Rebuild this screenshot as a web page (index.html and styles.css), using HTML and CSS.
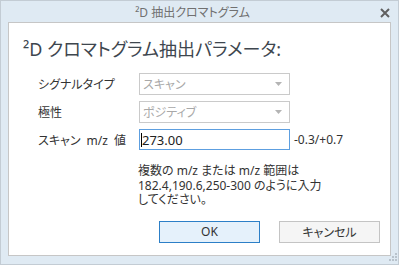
FILE: index.html
```html
<!DOCTYPE html>
<html lang="ja">
<head>
  <meta charset="UTF-8">
  <title>2D 抽出クロマトグラム</title>
  <link rel="stylesheet" href="styles.css">
</head>
<body>
  <div class="dialog">
    <div class="title-bar">
      <span class="title">²D 抽出クロマトグラム</span>
      <svg class="close" width="10" height="10" viewBox="0 0 10 10">
        <path d="M1 1 L9 9 M9 1 L1 9" stroke="#5f5f5f" stroke-width="2" fill="none"/>
      </svg>
    </div>

    <div class="client">
      <h1>²D クロマトグラム抽出パラメータ:</h1>

      <div class="form-grid">
        <label>シグナルタイプ</label>
        <div class="select disabled">
          <span>スキャン</span>
          <svg width="7" height="4" viewBox="0 0 7 4"><path d="M0 0 H7 L3.5 4 Z" fill="#b4b4b4"/></svg>
        </div>
        <span></span>

        <label>極性</label>
        <div class="select disabled">
          <span>ポジティブ</span>
          <svg width="7" height="4" viewBox="0 0 7 4"><path d="M0 0 H7 L3.5 4 Z" fill="#b4b4b4"/></svg>
        </div>
        <span></span>

        <label class="spaced">スキャン m/z 値</label>
        <div class="text-input"><span class="caret"></span>273.00</div>
        <span class="range">-0.3/+0.7</span>
      </div>

      <div class="hint">
        <div>複数の m/z または m/z 範囲は</div>
        <div>182.4,190.6,250-300 のように入力</div>
        <div>してください。</div>
      </div>

      <div class="buttons">
        <button class="btn primary">OK</button>
        <button class="btn">キャンセル</button>
      </div>
    </div>

    <svg class="grip" width="12" height="12" viewBox="0 0 12 12">
      <g fill="#b9c3cc">
        <rect x="10" y="2" width="2" height="2"/>
        <rect x="7" y="5" width="2" height="2"/>
        <rect x="10" y="5" width="2" height="2"/>
        <rect x="4" y="8" width="2" height="2"/>
        <rect x="7" y="8" width="2" height="2"/>
        <rect x="10" y="8" width="2" height="2"/>
      </g>
    </svg>
  </div>
</body>
</html>
```

FILE: styles.css
```css
body {
  margin: 0;
  padding: 0;
  font-family: "Noto Sans", "Noto Sans CJK JP", sans-serif;
  font-feature-settings: "palt";
  font-size: 12px;
  color: #333333;
}

.dialog {
  position: relative;
  width: 399px;
  height: 265px;
  box-sizing: border-box;
  background-color: #dfeaf3;
  border: 1px solid #c3ccd4;
}

.title-bar {
  height: 21px;
  display: flex;
  align-items: center;
  padding-right: 24px;
}

.title {
  flex: 1;
  text-align: center;
  color: #707070;
  font-size: 12px;
  padding-left: 4px;
}

.close {
  margin-top: 2px;
  margin-right: -16px;
}

.client {
  margin-left: 7px;
  width: 383px;
  height: 234px;
  box-sizing: border-box;
  background-color: #ffffff;
  border: 1px solid #c6c6c6;
}

h1 {
  margin: 0;
  padding: 14px 0 0 14px;
  font-size: 18px;
  line-height: 24px;
  font-weight: normal;
  color: #3e464e;
}

.form-grid {
  display: grid;
  grid-template-columns: 101px 151px auto;
  row-gap: 6px;
  align-items: center;
  margin-top: 12px;
  padding-left: 29px;
}

label {
  color: #333333;
}

.spaced {
  word-spacing: 3px;
}

.select {
  height: 22px;
  box-sizing: border-box;
  border: 1px solid #cacaca;
  display: flex;
  align-items: center;
  justify-content: space-between;
  padding: 0 7px 0 3px;
}

.select.disabled {
  color: #a8a8a8;
}

.text-input {
  height: 21px;
  box-sizing: border-box;
  border: 1px solid #5d9fe0;
  display: flex;
  align-items: center;
  padding-left: 1px;
  color: #222222;
  font-size: 13px;
}

.caret {
  width: 1px;
  height: 14px;
  background-color: #000000;
}

.range {
  padding-left: 4px;
  color: #333333;
}

.hint {
  margin: 14px 0 0 129px;
  line-height: 14.5px;
  color: #333333;
}

.buttons {
  display: flex;
  justify-content: flex-end;
  gap: 19px;
  margin-top: 13px;
  padding-right: 10px;
}

.btn {
  width: 101px;
  height: 22px;
  box-sizing: border-box;
  font-family: "Noto Sans", "Noto Sans CJK JP", sans-serif;
  font-feature-settings: "palt";
  font-size: 12px;
  color: #333333;
  background-color: #f5f5f5;
  border: 1px solid #c4c4c4;
  padding: 0;
}

.btn.primary {
  background-color: #e5f1fb;
  border: 1px solid #2c7fc7;
}

.grip {
  position: absolute;
  right: 1px;
  bottom: 1px;
}
```
